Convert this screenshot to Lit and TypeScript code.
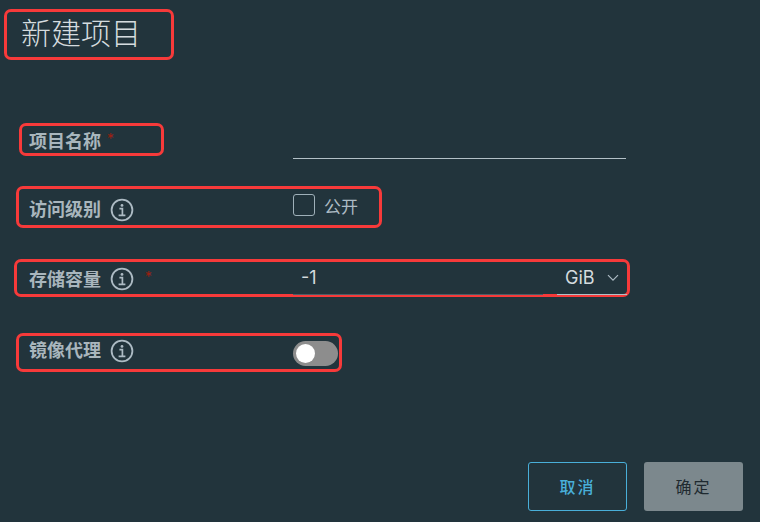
import { LitElement, html, css } from 'lit';
import { customElement } from 'lit/decorators.js';

const infoIcon = html`<svg class="info" viewBox="0 0 24 24" width="24" height="24" fill="none" stroke="currentColor">
    <circle cx="12" cy="12" r="10.4" stroke-width="1.8"></circle>
    <circle cx="12" cy="7.4" r="1.4" fill="currentColor" stroke="none"></circle>
    <path d="M9.4 10.6h3v6.6M8.6 17.4h6.8" stroke-width="1.7"></path>
</svg>`;

@customElement('app-root')
export class AppRoot extends LitElement {
    static styles = css`
        :host {
            display: flex;
            flex-direction: column;
            width: 760px;
            height: 522px;
            box-sizing: border-box;
            overflow: hidden;
            position: relative;
            background: #22343c;
            color: #adbbc4;
            font-family: Inter, "Noto Sans CJK SC", sans-serif;
        }
        .mark {
            box-sizing: border-box;
            display: flex;
            align-items: center;
            border: 3px solid #f73a3a;
            border-radius: 7px;
        }
        .title {
            width: 170px;
            height: 51px;
            margin: 9px 0 0 4px;
            padding: 0 0 8px 14px;
            font-family: "Noto Sans CJK SC", sans-serif;
            font-size: 30px;
            font-weight: 300;
            color: #d5dcdf;
            white-space: nowrap;
        }
        .row {
            display: flex;
            align-items: flex-end;
        }
        .label {
            font-family: "Noto Sans CJK SC", sans-serif;
            font-size: 18px;
            font-weight: 700;
            color: #a9b6bd;
            white-space: nowrap;
        }
        .req {
            flex: none;
            width: 8px;
            color: #9e1f10;
            font-size: 14px;
            font-weight: 400;
        }
        .info {
            flex: none;
            color: #adbbc4;
        }
        .name-row {
            margin: 63px 0 0 19px;
            height: 36px;
        }
        .name-mark {
            width: 145px;
            height: 33px;
            padding-left: 7px;
            align-self: flex-start;
        }
        .name-mark .req {
            margin: -3px 0 0 6px;
        }
        .name-input {
            width: 333px;
            margin-left: 129px;
            border-bottom: 1px solid #b3c0c7;
        }
        .access-mark {
            width: 366px;
            height: 42px;
            margin: 27px 0 0 16px;
            padding-left: 10px;
        }
        .access-mark .label {
            margin-top: 2px;
        }
        .access-mark .info {
            margin-left: 9px;
            margin-top: 5px;
        }
        .checkbox {
            box-sizing: border-box;
            width: 22px;
            height: 22px;
            margin-left: 159px;
            margin-top: -4px;
            border: 1px solid #9fb0b9;
            border-radius: 3px;
        }
        .check-label {
            margin-left: 9px;
            margin-top: -4px;
            font-family: "Noto Sans CJK SC", sans-serif;
            font-size: 17px;
            color: #adbbc4;
        }
        .quota-mark {
            width: 616px;
            height: 38px;
            margin: 31px 0 0 14px;
            padding-left: 12px;
        }
        .quota-mark .info {
            margin-left: 9px;
            margin-top: 2px;
        }
        .quota-mark .req {
            margin: -4px 0 0 11px;
        }
        .quota-input {
            box-sizing: border-box;
            width: 250px;
            height: 34px;
            margin-left: 140px;
            padding: 0 0 0 8px;
            display: flex;
            align-items: center;
            font-size: 18px;
            color: #d5dcdf;
            border-bottom: 1px solid #4c5e67;
        }
        .unit {
            box-sizing: border-box;
            display: flex;
            align-items: center;
            gap: 12px;
            width: 70px;
            height: 34px;
            margin-left: 14px;
            padding-left: 8px;
            font-size: 18px;
            color: #d5dcdf;
            border-bottom: 1px solid #b3c0c7;
        }
        .toggle-mark {
            width: 326px;
            height: 39px;
            margin: 36px 0 0 16px;
            padding-left: 10px;
        }
        .toggle-mark .label {
            margin-top: -8px;
        }
        .toggle-mark .info {
            margin-left: 9px;
            margin-top: -4px;
        }
        .toggle {
            display: flex;
            align-items: center;
            box-sizing: border-box;
            width: 45px;
            height: 25px;
            margin: 1px 0 0 159px;
            padding-left: 3px;
            border-radius: 13px;
            background: #8d8d8d;
        }
        .toggle span {
            width: 19px;
            height: 19px;
            border-radius: 50%;
            background: #fff;
        }
        .actions {
            display: flex;
            gap: 17px;
            margin: auto 17px 11px auto;
        }
        .btn {
            box-sizing: border-box;
            width: 99px;
            height: 49px;
            display: flex;
            align-items: center;
            justify-content: center;
            border-radius: 3px;
            padding-bottom: 2px;
            font-family: "Noto Sans CJK SC", sans-serif;
            font-size: 16px;
            letter-spacing: 2px;
        }
        .cancel {
            border: 1px solid #49afd9;
            color: #49afd9;
            font-weight: 500;
        }
        .ok {
            background: #7c888d;
            color: #1f2a30;
        }
    `;

    render() {
        return html`
            <div class="mark title">新建项目</div>

            <div class="row name-row">
                <div class="mark name-mark">
                    <span class="label">项目名称</span>
                    <span class="req">*</span>
                </div>
                <div class="name-input"></div>
            </div>

            <div class="mark access-mark">
                <span class="label">访问级别</span>
                ${infoIcon}
                <div class="checkbox"></div>
                <span class="check-label">公开</span>
            </div>

            <div class="mark quota-mark">
                <span class="label">存储容量</span>
                ${infoIcon}
                <span class="req">*</span>
                <div class="quota-input">-1</div>
                <div class="unit">
                    GiB
                    <svg viewBox="0 0 12 8" width="12" height="8" fill="none" stroke="#adbbc4" stroke-width="1.2">
                        <path d="M1 1.2l5 5 5-5"></path>
                    </svg>
                </div>
            </div>

            <div class="mark toggle-mark">
                <span class="label">镜像代理</span>
                ${infoIcon}
                <div class="toggle"><span></span></div>
            </div>

            <div class="actions">
                <div class="btn cancel">取消</div>
                <div class="btn ok">确定</div>
            </div>
        `;
    }
}
